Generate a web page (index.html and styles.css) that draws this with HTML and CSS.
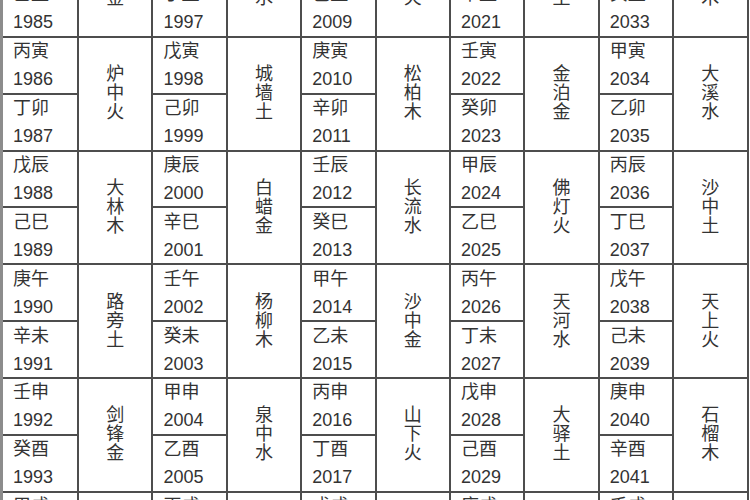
FILE: index.html
```html
<!DOCTYPE html>
<html lang="zh">
<head>
<meta charset="utf-8">
<title>六十甲子纳音表</title>
<link rel="stylesheet" href="styles.css">
</head>
<body>
<div class="sheet">
  <div class="year"><span>甲子</span><span>1984</span></div>
  <div class="nayin"><span>海中金</span></div>
  <div class="year"><span>丙子</span><span>1996</span></div>
  <div class="nayin"><span>涧下水</span></div>
  <div class="year"><span>戊子</span><span>2008</span></div>
  <div class="nayin"><span>霹雳火</span></div>
  <div class="year"><span>庚子</span><span>2020</span></div>
  <div class="nayin"><span>壁上土</span></div>
  <div class="year"><span>壬子</span><span>2032</span></div>
  <div class="nayin"><span>桑柘木</span></div>
  <div class="year"><span>乙丑</span><span>1985</span></div>
  <div class="year"><span>丁丑</span><span>1997</span></div>
  <div class="year"><span>己丑</span><span>2009</span></div>
  <div class="year"><span>辛丑</span><span>2021</span></div>
  <div class="year"><span>癸丑</span><span>2033</span></div>

  <div class="year"><span>丙寅</span><span>1986</span></div>
  <div class="nayin"><span>炉中火</span></div>
  <div class="year"><span>戊寅</span><span>1998</span></div>
  <div class="nayin"><span>城墙土</span></div>
  <div class="year"><span>庚寅</span><span>2010</span></div>
  <div class="nayin"><span>松柏木</span></div>
  <div class="year"><span>壬寅</span><span>2022</span></div>
  <div class="nayin"><span>金泊金</span></div>
  <div class="year"><span>甲寅</span><span>2034</span></div>
  <div class="nayin"><span>大溪水</span></div>
  <div class="year"><span>丁卯</span><span>1987</span></div>
  <div class="year"><span>己卯</span><span>1999</span></div>
  <div class="year"><span>辛卯</span><span>2011</span></div>
  <div class="year"><span>癸卯</span><span>2023</span></div>
  <div class="year"><span>乙卯</span><span>2035</span></div>

  <div class="year"><span>戊辰</span><span>1988</span></div>
  <div class="nayin"><span>大林木</span></div>
  <div class="year"><span>庚辰</span><span>2000</span></div>
  <div class="nayin"><span>白蜡金</span></div>
  <div class="year"><span>壬辰</span><span>2012</span></div>
  <div class="nayin"><span>长流水</span></div>
  <div class="year"><span>甲辰</span><span>2024</span></div>
  <div class="nayin"><span>佛灯火</span></div>
  <div class="year"><span>丙辰</span><span>2036</span></div>
  <div class="nayin"><span>沙中土</span></div>
  <div class="year"><span>己巳</span><span>1989</span></div>
  <div class="year"><span>辛巳</span><span>2001</span></div>
  <div class="year"><span>癸巳</span><span>2013</span></div>
  <div class="year"><span>乙巳</span><span>2025</span></div>
  <div class="year"><span>丁巳</span><span>2037</span></div>

  <div class="year"><span>庚午</span><span>1990</span></div>
  <div class="nayin"><span>路旁土</span></div>
  <div class="year"><span>壬午</span><span>2002</span></div>
  <div class="nayin"><span>杨柳木</span></div>
  <div class="year"><span>甲午</span><span>2014</span></div>
  <div class="nayin"><span>沙中金</span></div>
  <div class="year"><span>丙午</span><span>2026</span></div>
  <div class="nayin"><span>天河水</span></div>
  <div class="year"><span>戊午</span><span>2038</span></div>
  <div class="nayin"><span>天上火</span></div>
  <div class="year"><span>辛未</span><span>1991</span></div>
  <div class="year"><span>癸未</span><span>2003</span></div>
  <div class="year"><span>乙未</span><span>2015</span></div>
  <div class="year"><span>丁未</span><span>2027</span></div>
  <div class="year"><span>己未</span><span>2039</span></div>

  <div class="year"><span>壬申</span><span>1992</span></div>
  <div class="nayin"><span>剑锋金</span></div>
  <div class="year"><span>甲申</span><span>2004</span></div>
  <div class="nayin"><span>泉中水</span></div>
  <div class="year"><span>丙申</span><span>2016</span></div>
  <div class="nayin"><span>山下火</span></div>
  <div class="year"><span>戊申</span><span>2028</span></div>
  <div class="nayin"><span>大驿土</span></div>
  <div class="year"><span>庚申</span><span>2040</span></div>
  <div class="nayin"><span>石榴木</span></div>
  <div class="year"><span>癸酉</span><span>1993</span></div>
  <div class="year"><span>乙酉</span><span>2005</span></div>
  <div class="year"><span>丁酉</span><span>2017</span></div>
  <div class="year"><span>己酉</span><span>2029</span></div>
  <div class="year"><span>辛酉</span><span>2041</span></div>

  <div class="year"><span>甲戌</span><span>1994</span></div>
  <div class="nayin"><span>山头火</span></div>
  <div class="year"><span>丙戌</span><span>2006</span></div>
  <div class="nayin"><span>屋上土</span></div>
  <div class="year"><span>戊戌</span><span>2018</span></div>
  <div class="nayin"><span>平地木</span></div>
  <div class="year"><span>庚戌</span><span>2030</span></div>
  <div class="nayin"><span>钗钏金</span></div>
  <div class="year"><span>壬戌</span><span>2042</span></div>
  <div class="nayin"><span>大海水</span></div>
  <div class="year"><span>乙亥</span><span>1995</span></div>
  <div class="year"><span>丁亥</span><span>2007</span></div>
  <div class="year"><span>己亥</span><span>2019</span></div>
  <div class="year"><span>辛亥</span><span>2031</span></div>
  <div class="year"><span>癸亥</span><span>2043</span></div>
</div>
</body>
</html>
```
FILE: styles.css
```css
html, body {
  margin: 0;
  padding: 0;
  overflow: hidden;
  background: #ffffff;
}

.sheet {
  margin-top: -78px;
  display: grid;
  grid-template-columns: 74px repeat(9, 72.4px);
  grid-auto-rows: 54.875px;
  gap: 2px;
  padding: 2px 2px 2px 0;
  border-left: 3px solid #8c8c8c;
  background: #4d4d4d;
  width: max-content;
  font-family: "Liberation Sans", "Noto Sans CJK SC", sans-serif;
  font-size: 18px;
  color: #333333;
}

.year {
  background: #ffffff;
  padding-left: 10px;
  display: flex;
  flex-direction: column;
  justify-content: center;
  line-height: 28px;
}

.nayin {
  grid-row: span 2;
  background: #ffffff;
  display: flex;
  align-items: center;
  justify-content: center;
}

.nayin span {
  width: 18px;
  line-height: 19px;
  text-align: center;
}
```
